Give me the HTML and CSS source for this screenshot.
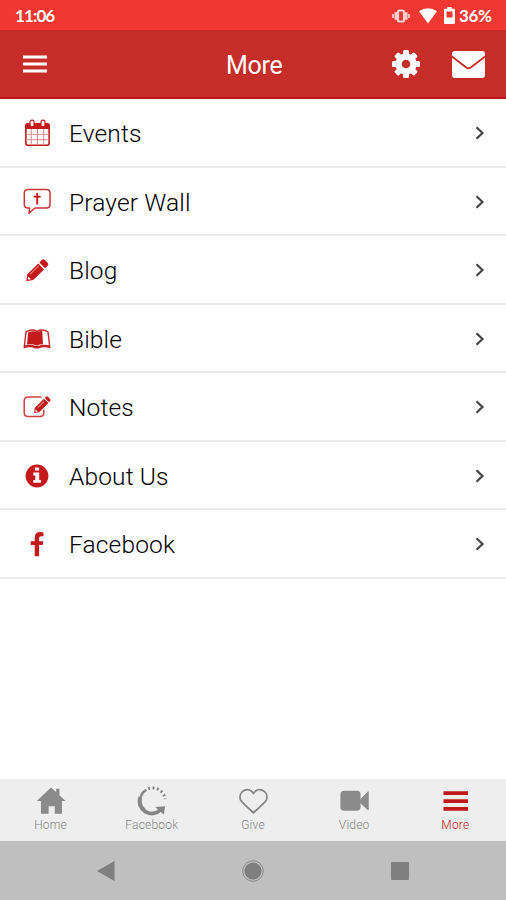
FILE: index.html
```html
<!DOCTYPE html>
<html lang="en">
<head>
    <meta charset="UTF-8">
    <meta name="viewport" content="width=device-width, initial-scale=1.0">
    <title>More</title>
    <link rel="stylesheet" href="styles.css">
</head>
<body>

<div class="app">
    <!-- Status bar -->
    <div class="status-bar">
        <span class="clock">11:06</span>
        <svg class="vibrate" width="18" height="14" viewBox="0 0 18 14" fill="none" stroke="#ffd0cc">
            <path d="M1 5v4M17 5v4" stroke-width="1.800"/>
            <path d="M3.800 3.200v7.600M14.200 3.200v7.600" stroke-width="2.600"/>
            <rect x="6" y="1.500" width="6" height="11" rx="1.500" stroke-width="2.200"/>
        </svg>
        <svg class="wifi" width="18" height="16" viewBox="0 0 18 16"><path d="M0 3.2Q9-2.6 18 3.2L9 15.5z" fill="#fff"/></svg>
        <svg class="battery" width="11" height="17" viewBox="0 0 11 17">
            <path fill="#fff" fill-rule="evenodd" d="M3.3 0h4.4v1.8H10q1 0 1 1V16q0 1-1 1H1q-1 0-1-1V2.800q0-1 1-1h2.300zM2.500 4.500v6h6v-6z"/>
        </svg>
        <span class="percent">36%</span>
    </div>

    <!-- Header -->
    <header class="header">
        <svg class="menu-icon" width="24" height="20" viewBox="0 0 24 20"><path d="M0 3h24M0 10h24M0 17h24" stroke="#fff" stroke-width="2.800"/></svg>
        <h1 class="title">More</h1>
        <svg class="gear-icon" width="28" height="28" viewBox="0 0 28 28">
            <g fill="#fff">
                <rect x="11" y="0" width="6" height="28" rx="1.500"/>
                <rect x="11" y="0" width="6" height="28" rx="1.500" transform="rotate(45 14 14)"/>
                <rect x="11" y="0" width="6" height="28" rx="1.500" transform="rotate(90 14 14)"/>
                <rect x="11" y="0" width="6" height="28" rx="1.500" transform="rotate(135 14 14)"/>
                <circle cx="14" cy="14" r="10.600"/>
            </g>
            <circle cx="14" cy="14" r="4.300" fill="#c62d28"/>
        </svg>
        <svg class="mail-icon" width="33" height="27" viewBox="0 0 33 27">
            <rect width="33" height="27" rx="3" fill="#fff"/>
            <path d="M-.5 5.200L14.300 16.500q2.200 1.500 4.400 0L33.500 5.200" fill="none" stroke="#c62d28" stroke-width="1.900"/>
        </svg>
    </header>

    <!-- Menu list -->
    <ul class="menu">
        <li class="menu-item">
            <svg class="icon" viewBox="0 0 28 28">
                <rect x="2.900" y="5.400" width="23.200" height="20.800" rx="2" fill="#fff" stroke="#c41a1b" stroke-width="1.600"/>
                <path d="M2.100 10V6.500q0-2.400 2.400-2.400h20q2.400 0 2.400 2.400V10z" fill="#c41a1b"/>
                <path d="M8.300 10v16M14.500 10v16M20.700 10v16M3 15.300h23M3 20.700h23" stroke="#dc8d8d" stroke-width="1"/>
                <rect x="7" y="1.200" width="4" height="6.500" rx="1.800" fill="#fff" stroke="#c41a1b" stroke-width="1.200"/>
                <rect x="18" y="1.200" width="4" height="6.500" rx="1.800" fill="#fff" stroke="#c41a1b" stroke-width="1.200"/>
            </svg>
            <span class="label">Events</span>
            <svg class="chevron" viewBox="0 0 10 14"><path d="M1.500 1.300L7.500 7l-6 5.700"/></svg>
        </li>
        <li class="menu-item">
            <svg class="icon" viewBox="0 0 28 28">
                <path d="M5 1.500h18.500q3.500 0 3.500 3.500v11.500q0 3.500-3.500 3.500H12l-6 5.200.7-5.200H5q-3.700 0-3.700-3.500V5Q1.300 1.500 5 1.500z" fill="none" stroke="#cb3535" stroke-width="1.500" stroke-linejoin="round"/>
                <path d="M14.200 5v11.500" stroke="#c41a1b" stroke-width="1.900"/>
                <path d="M10.700 8.700h7" stroke="#c41a1b" stroke-width="1.800"/>
            </svg>
            <span class="label">Prayer Wall</span>
            <svg class="chevron" viewBox="0 0 10 14"><path d="M1.500 1.300L7.500 7l-6 5.700"/></svg>
        </li>
        <li class="menu-item">
            <svg class="icon" viewBox="0 0 28 28">
                <path fill="#c41a1b" d="M3.200 25.300l1.200-7L15.200 7.600l5.900 5.800L10.200 24.100z"/>
                <path fill="#c41a1b" d="M16.300 6.500l2.700-2.700q1.300-1.200 2.600 0l3.200 3.200q1.200 1.300 0 2.600l-2.700 2.700z"/>
                <path fill="#fff" d="M5.200 20.800l2.700 2.500-2.200.5-1-.9z"/>
                <path d="M7 18.300l8.700-8.500" stroke="#f0b3b3" stroke-width="1"/>
            </svg>
            <span class="label">Blog</span>
            <svg class="chevron" viewBox="0 0 10 14"><path d="M1.500 1.300L7.500 7l-6 5.700"/></svg>
        </li>
        <li class="menu-item">
            <svg class="icon" viewBox="0 0 28 28">
                <path d="M1.200 22.500L3 6.800q5.500-3.300 11-.5 5.500-2.800 11 .5l1.800 15.700q-6.500-1.800-11 .2h-3.600Q7.500 20.700 1.200 22.500z" fill="#fff" stroke="#c8292a" stroke-width="1.400" stroke-linejoin="round"/>
                <path d="M5.200 7.200q5-1.800 8.800-.3 3-1.300 5.200-.9l.8 13.300q-3.500 0-6 1.400-4.500-2-10-1.100z" fill="#c41a1b"/>
                <path d="M1.200 22l.3-1.800q7-1.400 11 .8h3q4-2.200 11-.8l.3 1.800q-7-1.200-11 1h-3.600q-4-2.200-11-1z" fill="#c41a1b"/>
            </svg>
            <span class="label">Bible</span>
            <svg class="chevron" viewBox="0 0 10 14"><path d="M1.500 1.300L7.500 7l-6 5.700"/></svg>
        </li>
        <li class="menu-item">
            <svg class="icon" viewBox="0 0 28 28">
                <path d="M18.500 4H5Q1.200 4 1.200 7.800v12Q1.200 23.600 5 23.600h12q3.800 0 3.800-3.800v-3" fill="none" stroke="#cf4040" stroke-width="1.500"/>
                <path d="M11 20l.8-5.200L21 5.700l4.500 4.400-9.300 9.100z" fill="#c41a1b"/>
                <path d="M21.800 4.900l1.100-1.100q1-.9 2 0l2.200 2.200q.9 1 0 2L26 9.200z" fill="#c41a1b"/>
                <path d="M12.600 16.500l2.300 2.300-1.700.3-.9-.9z" fill="#fff"/>
                <path d="M15 14.500l6-5.900" stroke="#f4c4c4" stroke-width="1"/>
            </svg>
            <span class="label">Notes</span>
            <svg class="chevron" viewBox="0 0 10 14"><path d="M1.500 1.300L7.500 7l-6 5.700"/></svg>
        </li>
        <li class="menu-item">
            <svg class="icon" viewBox="0 0 28 28">
                <circle cx="14" cy="14" r="11.400" fill="#c41a1b"/>
                <path fill="#fff" d="M11.900 5.400h4.200v3.200h-4.200zM10.300 10.600h5.900v7.300h1.900v2.800h-7.800v-2.800h2v-4.500h-2z"/>
            </svg>
            <span class="label">About Us</span>
            <svg class="chevron" viewBox="0 0 10 14"><path d="M1.500 1.300L7.500 7l-6 5.700"/></svg>
        </li>
        <li class="menu-item">
            <svg class="icon" viewBox="0 0 28 28">
                <path fill="#c41a1b" d="M20.500 2.400v3.900h-2.300q-2.100 0-2.100 2v2.900h4.200l-.6 3.900h-3.600v11.200h-4.400V15.100H7.800v-3.900h3.900V7.900q0-5.800 5.600-5.800 2 0 3.200.3z"/>
            </svg>
            <span class="label">Facebook</span>
            <svg class="chevron" viewBox="0 0 10 14"><path d="M1.500 1.300L7.500 7l-6 5.700"/></svg>
        </li>
    </ul>

    <!-- Tabs -->
    <nav class="tabs">
        <div class="tab">
            <svg class="tab-icon" viewBox="0 0 32 32">
                <path fill="#8b8b8b" d="M16 1.500l5.500 5V3h3.500v6.800l6.500 6.200h-3.800v13.500h-7.700v-8h-6.500v8H5.300V16H.8z"/>
            </svg>
            <span>Home</span>
        </div>
        <div class="tab">
            <svg class="tab-icon" viewBox="0 0 32 32" fill="none" stroke="#858585">
                <path d="M10 4A13 13 0 0 0 8.500 25.500" stroke-width="2.600"/>
                <path d="M3.500 12A13 13 0 0 0 25 25.500" stroke-width="4"/>
                <path d="M12 2.900A13.500 13.500 0 0 1 30 14" stroke-width="3.200" stroke-dasharray="2 2.700"/>
                <path d="M19.500 22.500l10.500-1-1.500 9z" fill="#858585" stroke="none"/>
            </svg>
            <span>Facebook</span>
        </div>
        <div class="tab">
            <svg class="tab-icon" viewBox="0 0 32 32">
                <path d="M16.500 28.500Q4 17.500 2.500 14.500C0 5.500 11.500-.5 16.500 8 21.500-.5 33 5.500 30.500 14.500 29 17.500 16.500 28.500 16.500 28.500z" fill="none" stroke="#858585" stroke-width="1.900" stroke-linejoin="round"/>
            </svg>
            <span>Give</span>
        </div>
        <div class="tab">
            <svg class="tab-icon" viewBox="0 0 32 32">
                <rect x="1.500" y="5" width="21.500" height="21.500" rx="4" fill="#8b8b8b"/>
                <path d="M22.500 14.500L30.500 6q1.200-.8 1.200.5v18.600q0 1.300-1.200.5L22.500 18z" fill="#8b8b8b"/>
            </svg>
            <span>Video</span>
        </div>
        <div class="tab active">
            <svg class="tab-icon" viewBox="0 0 32 32">
                <path d="M3.700 7.700h26.200M3.700 16h26.200M3.700 24.400h26.200" stroke="#c0191b" stroke-width="4"/>
            </svg>
            <span>More</span>
        </div>
    </nav>

    <!-- System buttons -->
    <div class="system-nav">
        <svg width="18" height="20" viewBox="0 0 18 20"><path d="M0 10L17.500 0v20z" fill="#7f7f7f"/></svg>
        <svg width="22" height="22" viewBox="0 0 22 22">
            <circle cx="11" cy="11" r="10.300" fill="none" stroke="#8b8b8b" stroke-width="1"/>
            <circle cx="11" cy="11" r="8.600" fill="#7f7f7f"/>
        </svg>
        <svg width="18" height="18" viewBox="0 0 18 18"><rect width="18" height="18" rx="1" fill="#7f7f7f"/></svg>
    </div>
</div>

</body>
</html>
```
FILE: styles.css
```css
* {
    box-sizing: border-box;
}

body {
    margin: 0;
    font-family: Roboto, "Liberation Sans", sans-serif;
    background-color: #fff;
}

svg {
    display: block;
    flex: none;
}

.app {
    display: flex;
    flex-direction: column;
    width: 506px;
    height: 900px;
    overflow: hidden;
}

.status-bar {
    display: flex;
    align-items: center;
    height: 30px;
    padding: 1px 14px 0 15px;
    background-color: #f03731;
    color: #fff;
    font-family: Lato, Roboto, sans-serif;
    font-size: 17px;
    font-weight: 700;
}

.clock {
    margin-right: auto;
    letter-spacing: -0.9px;
}

.vibrate {
    margin-right: 9px;
}

.wifi {
    margin-right: 7px;
}

.battery {
    margin-right: 4px;
}

.percent {
    width: 33px;
    letter-spacing: -0.3px;
    white-space: nowrap;
}

.header {
    display: grid;
    grid-template-columns: 24px 1fr 28px 33px;
    align-items: center;
    height: 69px;
    padding: 1px 21px 0 23px;
    border-bottom: 2px solid #b91715;
    background-color: #c62d28;
    color: #fff;
}

.title {
    margin: 3px 0 0 179px;
    font-size: 25px;
    font-weight: 400;
    letter-spacing: -0.3px;
}

.gear-icon {
    justify-self: end;
    margin-right: 32px;
}

.menu {
    flex: 1;
    margin: 0;
    padding: 0;
    list-style: none;
}

.menu-item {
    display: flex;
    align-items: center;
    height: 68.57px;
    padding: 1.5px 20px 0 23px;
    border-bottom: 2px solid #ebebeb;
}

.icon {
    width: 28px;
    height: 28px;
    margin-right: 18px;
}

.label {
    flex: 1;
    padding-top: 1px;
    color: #000;
    font-size: 24.5px;
    font-weight: 300;
    letter-spacing: 0.15px;
}

.chevron {
    width: 10px;
    height: 14px;
    margin-right: 1px;
    fill: none;
    stroke: #444;
    stroke-width: 2.2px;
}

.tabs {
    display: grid;
    grid-template-columns: repeat(5, 1fr);
    height: 62px;
    background-color: #eee;
}

.tab {
    display: flex;
    flex-direction: column;
    align-items: center;
    padding-top: 7px;
    color: #858585;
    font-size: 12px;
    font-weight: 300;
    line-height: 14px;
    letter-spacing: 0.2px;
}

.tab-icon {
    width: 30px;
    height: 30px;
    margin-bottom: 2px;
}

.active {
    color: #c0191b;
}

.system-nav {
    display: flex;
    justify-content: space-between;
    align-items: center;
    height: 59px;
    padding: 0 97px;
    background-color: #bfbfbf;
}
```
